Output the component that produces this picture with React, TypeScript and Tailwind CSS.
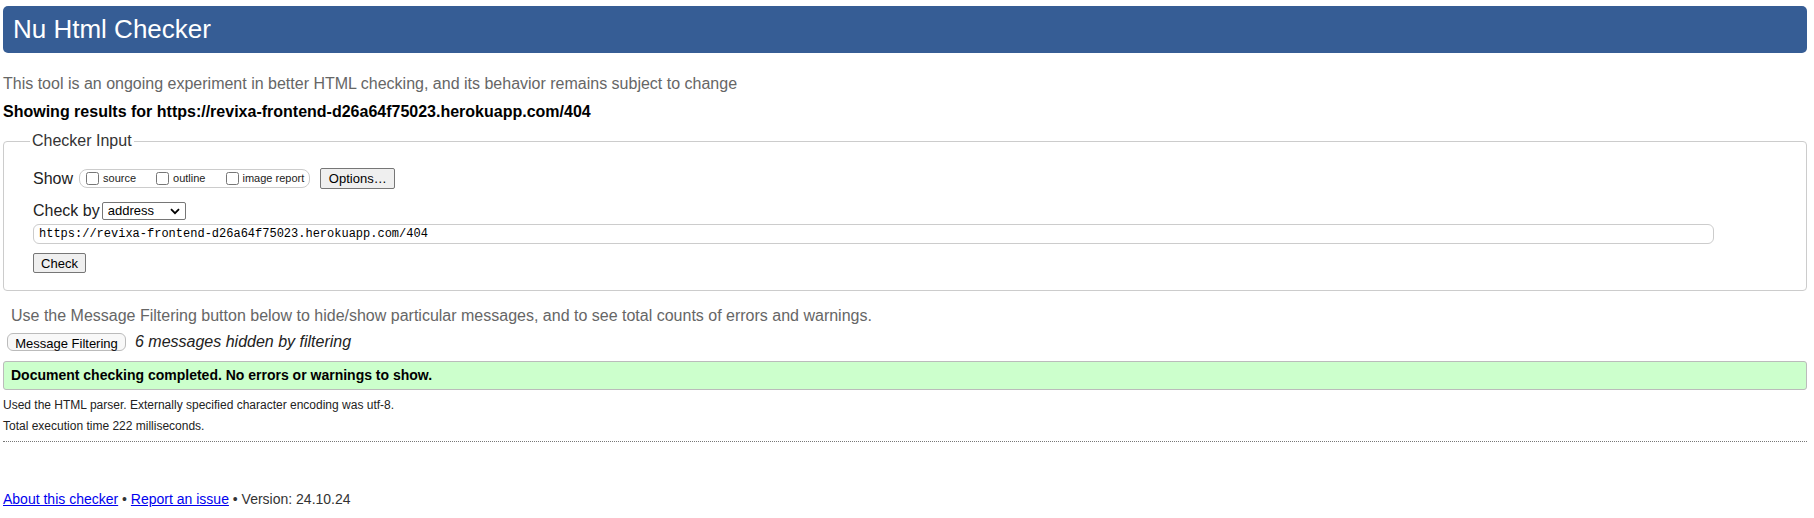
export default function App() {
  return (
    <div className="min-h-[518px] bg-white pl-[3px] pr-[7px] pt-[6px] font-['Liberation_Sans',Arial,sans-serif] text-[#222]">
      {/* Title bar */}
      <h1 className="flex h-[47px] items-center rounded-[5px] bg-[#365d95] pl-[10px] text-[26px] font-normal text-white">
        Nu Html Checker
      </h1>

      <p className="mt-[22px] text-[16px] leading-[18px] text-[#666]">
        This tool is an ongoing experiment in better HTML checking, and its behavior remains subject to change
      </p>
      <p className="mt-[10px] text-[16px] leading-[18px] font-bold text-black">
        Showing results for https://revixa-frontend-d26a64f75023.herokuapp.com/404
      </p>

      {/* Checker input */}
      <fieldset className="mt-[11px] rounded-[4px] border border-[#ccc] pb-[17px] pt-[18px]">
        <legend className="ml-[26px] px-[2px] text-[16px] leading-[18px] text-[#333]">Checker Input</legend>

        <div className="pl-[29px]">
          <div className="flex h-[21px] items-center">
            <span className="text-[16px] leading-[18px]">Show</span>
            <div className="ml-[6px] flex h-[19px] items-center rounded-[8px] border border-[#ccc] pl-[6px] pr-[5px] text-[11px] text-[#222]">
              <label className="flex items-center">
                <input type="checkbox" className="m-0 h-[13px] w-[13px]" />
                <span className="ml-[4px]">source</span>
              </label>
              <label className="ml-[20px] flex items-center">
                <input type="checkbox" className="m-0 h-[13px] w-[13px]" />
                <span className="ml-[4px]">outline</span>
              </label>
              <label className="ml-[21px] flex items-center">
                <input type="checkbox" className="m-0 h-[13px] w-[13px]" />
                <span className="ml-[3px]">image report</span>
              </label>
            </div>
            <button className="ml-[10px] h-[21px] w-[75px] rounded-[2px] border border-[#767676] bg-[#efefef] text-[13px] text-black">
              Options…
            </button>
          </div>

          <div className="mt-[12px] flex h-[20px] items-center">
            <span className="text-[16px] leading-[18px]">Check by</span>
            <div className="ml-[2px] flex h-[18px] w-[84px] items-center justify-between rounded-[2px] border border-[#767676] pl-[5px] pr-[5px] text-[13px] text-black">
              <span>address</span>
              <svg width="10" height="7" viewBox="0 0 10 7" fill="none" stroke="#000" strokeWidth="1.8">
                <path d="M1 1.2 L5 5.2 L9 1.2" />
              </svg>
            </div>
          </div>

          <div className="mt-[3px] flex h-[20px] w-[1681px] items-center rounded-[6px] border border-[#ccc] pl-[5px] font-['Liberation_Mono','DejaVu_Sans_Mono',monospace] text-[12px] text-black">
            https://revixa-frontend-d26a64f75023.herokuapp.com/404
          </div>

          <button className="mt-[9px] block h-[20px] w-[53px] rounded-[2px] border border-[#767676] bg-[#efefef] text-[13px] text-black">
            Check
          </button>
        </div>
      </fieldset>

      <p className="ml-[8px] mt-[16px] text-[16px] leading-[18px] text-[#666]">
        Use the Message Filtering button below to hide/show particular messages, and to see total counts of errors and warnings.
      </p>

      <div className="mt-[8px] flex h-[18px] items-center">
        <button className="ml-[4px] h-[18px] w-[119px] rounded-[6px] border border-[#bbb] bg-[#f8f8f8] text-[13px] text-black">
          Message Filtering
        </button>
        <span className="ml-[9px] text-[16px] italic text-[#222]">6 messages hidden by filtering</span>
      </div>

      <div className="mt-[10px] flex h-[29px] items-center rounded-[3px] border border-[#bbb] bg-[#ccffcc] pl-[7px] text-[14px] font-bold text-black">
        Document checking completed. No errors or warnings to show.
      </div>

      <p className="mt-[8px] text-[12px] leading-[14px] text-[#222]">
        Used the HTML parser. Externally specified character encoding was utf-8.
      </p>
      <p className="mt-[7px] text-[12px] leading-[14px] text-[#222]">Total execution time 222 milliseconds.</p>

      <div className="mt-[8px] border-t border-dotted border-[#777]" />

      <p className="mt-[49px] text-[14px] leading-[16px] text-[#333]">
        <a href="#" className="text-[#0000ee] underline">About this checker</a>
        {" • "}
        <a href="#" className="text-[#0000ee] underline">Report an issue</a>
        {" • Version: 24.10.24"}
      </p>
    </div>
  );
}
